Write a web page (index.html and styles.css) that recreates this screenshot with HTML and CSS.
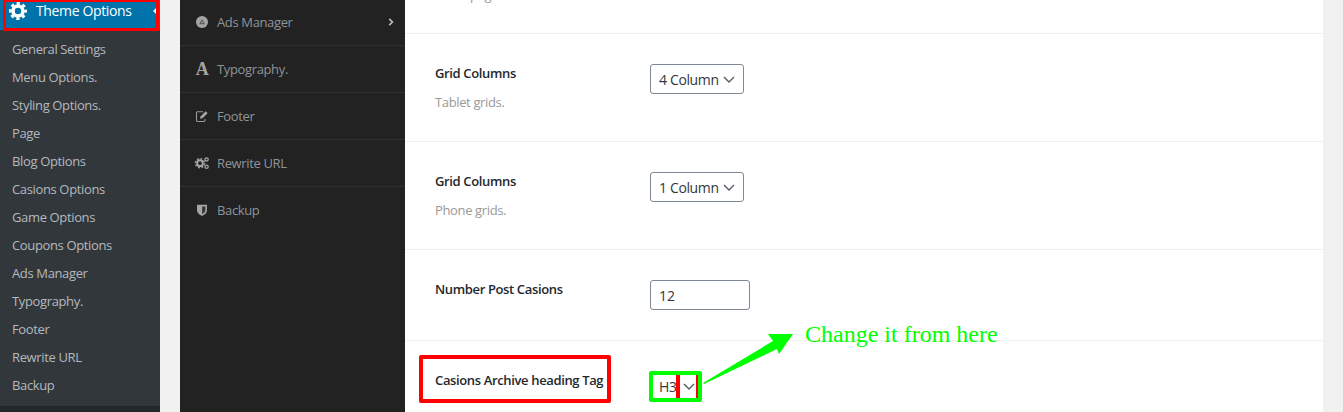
FILE: index.html
```html
<!DOCTYPE html>
<html lang="en">
<head>
    <meta charset="UTF-8">
    <meta name="viewport" content="width=device-width, initial-scale=1.0">
    <title>Theme Options</title>
    <link rel="stylesheet" href="styles.css">
</head>
<body>

<div class="page">
    <aside class="sidebar">
        <div class="sidebar-current">
            <svg class="gear" width="18" height="18" viewBox="0 0 18 18">
                <circle cx="9" cy="9" r="5" fill="none" stroke="#fff" stroke-width="3.6"/>
                <circle cx="9" cy="9" r="7.6" fill="none" stroke="#fff" stroke-width="2.8" stroke-dasharray="3.2 2.77" stroke-dashoffset="1.6"/>
            </svg>
            <span>Theme Options</span>
            <i class="notch"></i>
        </div>
        <ul class="sidebar-sub">
            <li>General Settings</li>
            <li>Menu Options.</li>
            <li>Styling Options.</li>
            <li>Page</li>
            <li>Blog Options</li>
            <li>Casions Options</li>
            <li>Game Options</li>
            <li>Coupons Options</li>
            <li>Ads Manager</li>
            <li>Typography.</li>
            <li>Footer</li>
            <li>Rewrite URL</li>
            <li>Backup</li>
        </ul>
    </aside>

    <nav class="panel">
        <div class="panel-item">
            <svg class="panel-icon" width="16" height="16" viewBox="0 0 16 16">
                <circle cx="8" cy="8" r="6" fill="#a5a5a5"/>
                <path d="M5 10.2 L8 5.2 L11 10.2 Z M6.8 9.3 H9.2 L8 7.2 Z" fill="#555" fill-rule="evenodd"/>
            </svg>
            <span>Ads Manager</span>
            <svg class="panel-arrow" width="6" height="8" viewBox="0 0 6 8">
                <path d="M1.2 .8 L4.4 4 L1.2 7.2" fill="none" stroke="#bbb" stroke-width="1.7"/>
            </svg>
        </div>
        <div class="panel-item">
            <b class="panel-letter">A</b>
            <span>Typography.</span>
        </div>
        <div class="panel-item">
            <svg class="panel-icon" width="16" height="16" viewBox="0 0 16 16">
                <path d="M11 11 V12.6 Q11 13.5 10 13.5 H3.4 Q2.5 13.5 2.5 12.6 V4.8 Q2.5 3.8 3.4 3.8 H9" fill="none" stroke="#999" stroke-width="1.1"/>
                <path d="M6 10.8 L6.5 8.4 L11.6 3.2 L13.7 5.2 L8.5 10.3 Z" fill="#a5a5a5"/>
            </svg>
            <span>Footer</span>
        </div>
        <div class="panel-item">
            <svg class="panel-icon" width="16" height="16" viewBox="0 0 16 16">
                <circle cx="6" cy="8.2" r="2.9" fill="none" stroke="#a5a5a5" stroke-width="2"/>
                <circle cx="6" cy="8.2" r="4.6" fill="none" stroke="#a5a5a5" stroke-width="1.4" stroke-dasharray="1.8 1.8"/>
                <circle cx="12.6" cy="4.4" r="1.6" fill="none" stroke="#a5a5a5" stroke-width="1.3"/>
                <circle cx="12.6" cy="11.8" r="1.6" fill="none" stroke="#a5a5a5" stroke-width="1.3"/>
            </svg>
            <span>Rewrite URL</span>
        </div>
        <div class="panel-item">
            <svg class="panel-icon" width="16" height="16" viewBox="0 0 16 16">
                <path d="M3 2.8 H13 V8 Q13 11.8 8 14 Q3 11.8 3 8 Z" fill="#a5a5a5"/>
                <path d="M8.2 4.4 H11.4 V8 Q11.4 10.6 8.2 12.2 Z" fill="#333"/>
            </svg>
            <span>Backup</span>
        </div>
    </nav>

    <main class="content">
        <div class="row row-clipped">
            <p class="desc">Items page.</p>
        </div>
        <div class="row">
            <div class="row-label">
                <h4>Grid Columns</h4>
                <p class="desc">Tablet grids.</p>
            </div>
            <div class="select select-column">4 Column
                <svg width="12" height="7" viewBox="0 0 12 7"><path d="M1 1 L6 6 L11 1" fill="none" stroke="#555d66" stroke-width="1.4"/></svg>
            </div>
        </div>
        <div class="row">
            <div class="row-label">
                <h4>Grid Columns</h4>
                <p class="desc">Phone grids.</p>
            </div>
            <div class="select select-column">1 Column
                <svg width="12" height="7" viewBox="0 0 12 7"><path d="M1 1 L6 6 L11 1" fill="none" stroke="#555d66" stroke-width="1.4"/></svg>
            </div>
        </div>
        <div class="row">
            <div class="row-label">
                <h4>Number Post Casions</h4>
            </div>
            <input class="number-input" type="text" value="12">
        </div>
        <div class="row row-last">
            <div class="row-label">
                <h4>Casions Archive heading Tag</h4>
            </div>
            <div class="select select-tag">H3
                <svg width="12" height="7" viewBox="0 0 12 7"><path d="M1 1 L6 6 L11 1" fill="none" stroke="#555d66" stroke-width="1.4"/></svg>
            </div>
        </div>
    </main>
</div>

<!-- markup drawn over the screenshot -->
<div class="mark mark-menu"></div>
<div class="mark mark-label"></div>
<div class="mark mark-select"></div>
<div class="mark mark-bar mark-bar-left"></div>
<div class="mark mark-bar mark-bar-right"></div>
<svg class="mark mark-arrow" width="100" height="60" viewBox="0 0 100 60">
    <path d="M3 54 L73 12 L68 5 L93 5 L79 25 L77 20 L4 55 Z" fill="#00ff00"/>
</svg>
<div class="mark mark-note">Change it from here</div>

</body>
</html>
```

FILE: styles.css
```css
* {
    box-sizing: border-box;
}
body {
    margin: 0;
    height: 412px;
    overflow: hidden;
    position: relative;
    background-color: #f1f1f1;
    font-family: "Open Sans", "Noto Sans", sans-serif;
    font-size: 13px;
    letter-spacing: -0.36px;
}
.page {
    display: flex;
    height: 412px;
}

/* wp admin menu */
.sidebar {
    width: 160px;
    flex-shrink: 0;
    background-color: #23282d;
}
.sidebar-current {
    display: flex;
    align-items: center;
    position: relative;
    height: 30px;
    padding: 0 0 9px 9px;
    gap: 9px;
    background-color: #0073aa;
    color: #fff;
    font-size: 14px;
}
.notch {
    position: absolute;
    right: 2px;
    top: 6px;
    border: 5px solid transparent;
    border-right-color: #f1f1f1;
}
.sidebar-sub {
    list-style: none;
    margin: 0;
    padding: 5px 0 7px;
    background-color: #32373c;
    color: #b4b9be;
}
.sidebar-sub li {
    height: 28px;
    line-height: 28px;
    padding-left: 12px;
}

/* options tabs */
.panel {
    width: 225px;
    flex-shrink: 0;
    margin-left: 20px;
    background-color: #222;
    color: #8f9499;
}
.panel-item {
    display: flex;
    align-items: center;
    height: 47px;
    padding-left: 14px;
    border-bottom: 1px solid #2f2f2f;
    position: relative;
}
.panel-item:first-child {
    height: 46px;
    padding-bottom: 1px;
}
.panel-item:last-child {
    height: 46px;
    border-bottom: none;
}
.panel-icon {
    width: 16px;
    margin-right: 7px;
    flex-shrink: 0;
}
.panel-letter {
    width: 16px;
    margin-right: 7px;
    text-align: center;
    font-family: "Liberation Serif", serif;
    font-size: 18px;
    color: #a5a5a5;
}
.panel-arrow {
    margin-left: auto;
    margin-right: 11px;
}

/* option rows */
.content {
    width: 918px;
    flex-shrink: 0;
    background-color: #fff;
    color: #23282d;
}
.row {
    display: flex;
    align-items: flex-start;
    padding: 30px 0 30px 30px;
    border-bottom: 1px solid #eee;
}
.row-clipped {
    height: 34px;
    padding-top: 0;
    padding-bottom: 0;
    overflow: hidden;
}
.row-clipped .desc {
    margin-top: -14px;
}
.row-last {
    border-bottom: none;
}
.row-label {
    width: 215px;
    flex-shrink: 0;
}
.row-label h4 {
    margin: 0;
    font-size: 13px;
    font-weight: 600;
    line-height: 18px;
}
.desc {
    margin: 11px 0 0;
    line-height: 18px;
    color: #999;
}
.select {
    display: flex;
    align-items: center;
    justify-content: space-between;
    height: 30px;
    padding: 0 8px 0 8px;
    border: 1px solid #7e8993;
    border-radius: 3px;
    font-size: 14px;
    color: #32373c;
}
.select-column {
    width: 94px;
}
.select-tag {
    width: 48px;
    padding-right: 2px;
}
.number-input {
    width: 100px;
    height: 30px;
    padding: 0 8px;
    border: 1px solid #7e8993;
    border-radius: 3px;
    font-family: inherit;
    font-size: 14px;
    color: #32373c;
}

/* annotations on top of the page */
.mark {
    position: absolute;
}
.mark-menu {
    left: 3px;
    top: 0;
    width: 156px;
    height: 31px;
    border: 3px solid #f00;
    border-top-width: 2px;
}
.mark-label {
    left: 419px;
    top: 355px;
    width: 192px;
    height: 48px;
    border: 4px solid #f00;
    border-radius: 2px;
}
.mark-select {
    left: 649px;
    top: 371px;
    width: 53px;
    height: 31px;
    border: 4px solid #0f0;
    border-radius: 2px;
}
.mark-bar {
    top: 375px;
    height: 23px;
    background-color: #f00;
}
.mark-bar-left {
    left: 676px;
    width: 4px;
}
.mark-bar-right {
    left: 696px;
    width: 2px;
}
.mark-arrow {
    left: 700px;
    top: 329px;
}
.mark-note {
    left: 805px;
    top: 319px;
    font-family: "Liberation Serif", serif;
    font-size: 24px;
    letter-spacing: 0;
    line-height: 30px;
    color: #0f0;
    white-space: nowrap;
}
```
